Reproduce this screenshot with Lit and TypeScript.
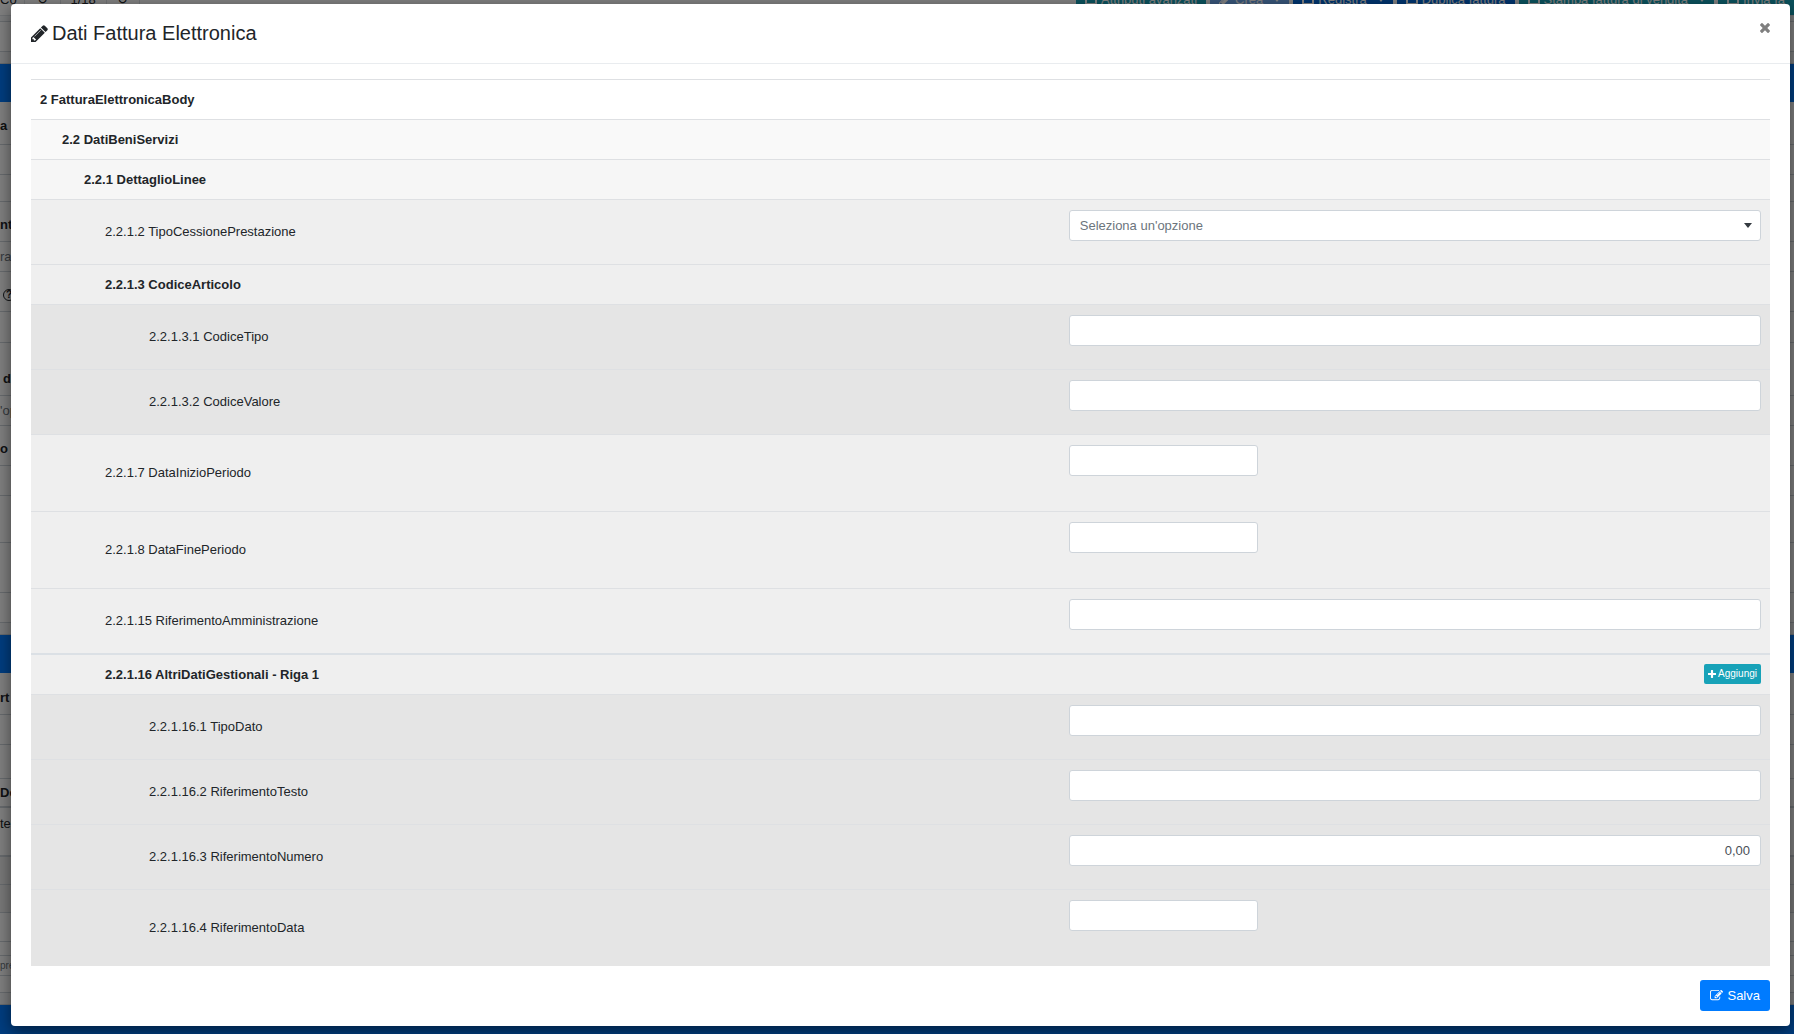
import { LitElement, html, css, svg, nothing } from "lit";
import { customElement, property } from "lit/decorators.js";

type Kind = "title" | "select" | "text" | "number" | "date";

interface Row {
  code: string;
  name: string;
  level: 1 | 2 | 3 | 4 | 5;
  kind: Kind;
  add?: boolean;
}

interface Band {
  h: number;
  cls?: string;
  text?: string;
  tcls?: string;
}

const ROWS: Row[] = [
  { code: "2", name: "FatturaElettronicaBody", level: 1, kind: "title" },
  { code: "2.2", name: "DatiBeniServizi", level: 2, kind: "title" },
  { code: "2.2.1", name: "DettaglioLinee", level: 3, kind: "title" },
  { code: "2.2.1.2", name: "TipoCessionePrestazione", level: 4, kind: "select" },
  { code: "2.2.1.3", name: "CodiceArticolo", level: 4, kind: "title" },
  { code: "2.2.1.3.1", name: "CodiceTipo", level: 5, kind: "text" },
  { code: "2.2.1.3.2", name: "CodiceValore", level: 5, kind: "text" },
  { code: "2.2.1.7", name: "DataInizioPeriodo", level: 4, kind: "date" },
  { code: "2.2.1.8", name: "DataFinePeriodo", level: 4, kind: "date" },
  { code: "2.2.1.15", name: "RiferimentoAmministrazione", level: 4, kind: "text" },
  { code: "2.2.1.16", name: "AltriDatiGestionali - Riga 1", level: 4, kind: "title", add: true },
  { code: "2.2.1.16.1", name: "TipoDato", level: 5, kind: "text" },
  { code: "2.2.1.16.2", name: "RiferimentoTesto", level: 5, kind: "text" },
  { code: "2.2.1.16.3", name: "RiferimentoNumero", level: 5, kind: "number" },
  { code: "2.2.1.16.4", name: "RiferimentoData", level: 5, kind: "date" },
];

const BANDS: Band[] = [
  { h: 6, cls: "gap" },
  { h: 30 },
  { h: 12, cls: "gap" },
  { h: 38, cls: "bar" },
  { h: 43, text: "a", tcls: "strong label" },
  { h: 30 },
  { h: 27 },
  { h: 40, text: "nto", tcls: "strong label" },
  { h: 30, text: "ra", tcls: "soft" },
  { h: 40, text: "?", tcls: "help" },
  { h: 31 },
  { h: 53, text: "d", tcls: "strong low inset" },
  { h: 30, text: "'op", tcls: "soft" },
  { h: 40, text: "o a", tcls: "strong label" },
  { h: 30 },
  { h: 47 },
  { h: 50 },
  { h: 30 },
  { h: 12, cls: "gap" },
  { h: 38, cls: "bar" },
  { h: 42, text: "rt", tcls: "strong low" },
  { h: 30 },
  { h: 34 },
  { h: 29, cls: "thick", text: "De", tcls: "strong" },
  { h: 49, cls: "thick", text: "tes", tcls: "high" },
  { h: 28, cls: "shade" },
  { h: 28, cls: "shade" },
  { h: 29 },
  { h: 14 },
  { h: 20, text: "pre", tcls: "tiny" },
  { h: 17 },
  { h: 12, cls: "gap" },
  { h: 38, cls: "bar" },
];

const PATHS = {
  pencil: {
    box: "128 128 1536 1536",
    d: "M491 1536l91-91-235-235-91 91v107h128v128h107zm523-928q0-22-22-22-10 0-17 7l-542 542q-7 7-7 17 0 22 22 22 10 0 17-7l542-542q7-7 7-17zm-54-192l416 416-832 832h-416v-416zm683 96q0 53-37 90l-166 166-416-416 166-165q36-38 90-38 53 0 91 38l235 234q37 39 37 91z",
  },
  plus: {
    box: "192 128 1408 1408",
    d: "M1600 736v192q0 40-28 68t-68 28h-416v416q0 40-28 68t-68 28h-192q-40 0-68-28t-28-68v-416h-416q-40 0-68-28t-28-68v-192q0-40 28-68t68-28h416v-416q0-40 28-68t68-28h192q40 0 68 28t28 68v416h416q40 0 68 28t28 68z",
  },
  times: {
    box: "302 366 1188 1188",
    d: "M1490 1322q0 40-28 68l-136 136q-28 28-68 28t-68-28l-294-294-294 294q-28 28-68 28t-68-28l-136-136q-28-28-28-68t28-68l294-294-294-294q-28-28-28-68t28-68l136-136q28-28 68-28t68 28l294 294 294-294q28-28 68-28t68 28l136 136q28 28 28 68t-28 68l-294 294 294 294q28 28 28 68z",
  },
  edit: {
    box: "0 0 1792 1792",
    d: "M888 1184l116-116-152-152-116 116v56h96v96h56zm440-720q-16-16-33 1l-350 350q-17 17-1 33t33-1l350-350q17-17 1-33zm80 594v190q0 119-84.5 203.5t-203.5 84.5h-832q-119 0-203.5-84.5t-84.5-203.5v-832q0-119 84.5-203.5t203.5-84.5h832q63 0 117 25 15 7 18 23 3 17-9 29l-49 49q-14 14-32 8-23-6-45-6h-832q-66 0-113 47t-47 113v832q0 66 47 113t113 47h832q66 0 113-47t47-113v-126q0-13 9-22l64-64q15-15 35-7t20 29zm-96-738l288 288-672 672h-288v-288zm444 132l-92 92-288-288 92-92q28-28 68-28t68 28l152 152q28 28 28 68t-28 68z",
  },
  caret: { box: "0 0 8 5", d: "M0 0h8L4 5z" },
  card: { box: "0 0 12 12", d: "M0 1h12v10H0zM2 3v6h8V3z" },
};

const icon = (name: keyof typeof PATHS, cls: string) => html`
  <svg class=${cls} viewBox=${PATHS[name].box} aria-hidden="true">
    ${svg`<path fill="currentColor" fill-rule="evenodd" d=${PATHS[name].d}></path>`}
  </svg>`;

/** The document page that stays visible around the dialog. */
@customElement("page-behind")
export class PageBehind extends LitElement {
  static styles = css`
    :host {
      display: block;
      background: #f4f6f9;
      color: #212529;
      font: 13px/20px "Liberation Sans", Arial, sans-serif;
    }
    .toolbar {
      display: flex;
      align-items: flex-end;
      height: 16px;
      overflow: hidden;
      gap: 4px;
      background: #fff;
      border-bottom: 1px solid #dee2e6;
      box-sizing: border-box;
    }
    .tab {
      flex: none;
      height: 31px;
      line-height: 31px;
    }
    .pager {
      flex: none;
      display: flex;
      margin: 0 auto 0 3px;
      height: 31px;
    }
    .pager span {
      box-sizing: border-box;
      width: 36px;
      border-left: 1px solid #dee2e6;
      text-align: center;
      line-height: 31px;
    }
    .pager .mid {
      width: 46px;
    }
    .pager .last {
      border-right: 1px solid #dee2e6;
      width: 34px;
    }
    .btn {
      flex: none;
      display: flex;
      align-items: center;
      gap: 4px;
      box-sizing: border-box;
      height: 31px;
      padding: 0 9px;
      border: 0;
      color: #fff;
      font: inherit;
      white-space: nowrap;
    }
    .info { background: #17a2b8; }
    .muted { background: #6ea8ee; }
    .primary { background: #0069d9; }
    .ico { width: 12px; height: 12px; }
    .caret { width: 6px; height: 4px; margin-left: 7px; }
    .band {
      box-sizing: border-box;
      display: flex;
      align-items: center;
      overflow: hidden;
      background: #fff;
      border-bottom: 1px solid #ced4da;
    }
    .gap { background: #f4f6f9; }
    .bar { background: #007bff; border: 0; }
    .shade { background: #f0f0f0; }
    .thick { border-bottom-width: 2px; }
    .strong { font-weight: 700; }
    .soft { color: #6c757d; }
    .label { padding-top: 6px; }
    .low { align-self: flex-end; padding-bottom: 6px; }
    .inset { padding-left: 3px; }
    .high { align-self: flex-start; padding-top: 6px; }
    .tiny { font-size: 10px; color: #6c757d; }
    .help {
      margin: 6px 0 0 3px;
      width: 10px;
      height: 10px;
      border: 1px solid #212529;
      border-radius: 50%;
      font-size: 10px;
      font-weight: 700;
      line-height: 10px;
      text-align: center;
    }
  `;

  private btn(cls: string, ic: keyof typeof PATHS, label: string, caret = false) {
    return html`<button class="btn ${cls}" type="button" tabindex="-1">
      ${icon(ic, "ico")}<span>${label}</span>${caret ? icon("caret", "caret") : nothing}
    </button>`;
  }

  render() {
    return html`
      <div class="toolbar">
        <span class="tab">Co</span>
        <div class="pager"><span>&#8635;</span><span class="mid">1/18</span><span class="last">&#8635;</span></div>
        ${this.btn("info", "card", "Attributi avanzati")}
        ${this.btn("muted", "pencil", "Crea", true)}
        ${this.btn("primary", "card", "Registra", true)}
        ${this.btn("primary", "card", "Duplica fattura")}
        ${this.btn("info", "card", "Stampa fattura di vendita", true)}
        ${this.btn("info", "card", "Invia fa")}
      </div>
      ${BANDS.map(
        (b) => html`<div class="band ${b.cls ?? ""}" style="height:${b.h}px">
          ${b.text ? html`<span class=${b.tcls ?? ""}>${b.text}</span>` : nothing}
        </div>`
      )}
    `;
  }
}

/** The dialog that edits the electronic invoice tree. */
@customElement("invoice-dialog")
export class InvoiceDialog extends LitElement {
  @property({ attribute: false }) rows: Row[] = ROWS;

  static styles = css`
    :host {
      display: block;
      box-sizing: border-box;
      background: #fff;
      border-radius: 4px;
      box-shadow: 0 5px 15px rgba(0, 0, 0, 0.5);
      color: #212529;
      font: 13px/19px "Liberation Sans", Arial, sans-serif;
    }
    .head {
      display: flex;
      align-items: flex-start;
      justify-content: space-between;
      box-sizing: border-box;
      height: 60px;
      padding: 14px 20px;
      border-bottom: 1px solid #e9ecef;
    }
    .title {
      display: flex;
      align-items: center;
      gap: 4px;
      margin: 0;
      font-size: 20px;
      font-weight: 400;
      line-height: 30px;
    }
    .pencil { width: 17px; height: 17px; }
    .close {
      display: flex;
      padding: 5px 0;
      border: 0;
      background: none;
      color: #7f7f7f;
    }
    .times { width: 10px; height: 10px; }
    .body { padding: 15px 20px; }
    .tree {
      width: 100%;
      border-collapse: separate;
      border-spacing: 0;
      table-layout: fixed;
    }
    .c1 { width: 59.1%; }
    th, td {
      box-sizing: border-box;
      padding: 10px 9px;
      border-top: 1px solid #dee0e3;
      text-align: left;
      font-weight: 400;
      vertical-align: middle;
    }
    td { vertical-align: top; padding-left: 10px; }
    .heading th { font-weight: 700; height: 40px; }
    .heading td { padding-top: 9px; padding-bottom: 9px; text-align: right; }
    .field th { height: 65px; padding-bottom: 11px; }
    .tall th { height: 77px; }
    .repeat th, .repeat td { height: 41px; border-top-width: 2px; border-top-color: #dbe0e5; }
    .l2 { background: #f9f9f9; }
    .l3 { background: #f6f6f6; }
    .l4 { background: #efefef; }
    .l5 { background: #e5e5e5; }
    .l2 th { padding-left: 31px; }
    .l3 th { padding-left: 53px; }
    .l4 th { padding-left: 74px; }
    .l5 th { padding-left: 118px; }
    .control {
      display: block;
      box-sizing: border-box;
      width: 100%;
      height: 31px;
      margin: 0;
      padding: 0 10px;
      border: 1px solid #ced4da;
      border-radius: 3px;
      background: #fff;
      color: #495057;
      font: inherit;
      appearance: none;
    }
    .number { text-align: right; }
    .date { width: 189px; }
    .pick { display: grid; align-items: center; }
    .pick > * { grid-area: 1 / 1; }
    .pick .control { color: #6c757d; }
    .caret {
      justify-self: end;
      width: 8px;
      height: 5px;
      margin-right: 9px;
      color: #343a40;
      pointer-events: none;
    }
    .add {
      display: inline-flex;
      align-items: center;
      gap: 2px;
      height: 20px;
      padding: 0 4px;
      border: 0;
      border-radius: 2px;
      background: #17a2b8;
      color: #fff;
      font: 10px/20px "Liberation Sans", Arial, sans-serif;
      vertical-align: top;
    }
    .plus { width: 8px; height: 8px; }
    .actions {
      display: flex;
      justify-content: flex-end;
      margin-top: 14px;
    }
    .save {
      display: flex;
      align-items: center;
      gap: 4px;
      height: 31px;
      padding: 0 10px;
      border: 0;
      border-radius: 3px;
      background: #007bff;
      color: #fff;
      font: inherit;
    }
    .edit { width: 13px; height: 13px; }
  `;

  private control(r: Row) {
    const id = `f-${r.code}`;
    if (r.kind === "select") {
      return html`<div class="pick">
        <select class="control" id=${id}><option>Seleziona un'opzione</option></select>
        ${icon("caret", "caret")}
      </div>`;
    }
    return html`<input class="control ${r.kind}" id=${id} type="text" .value=${r.kind === "number" ? "0,00" : ""} />`;
  }

  private row(r: Row) {
    const text = `${r.code} ${r.name}`;
    if (r.kind === "title") {
      return html`<tr class="heading l${r.level} ${r.add ? "repeat" : ""}">
        <th scope="row" colspan=${r.add ? 1 : 2}>${text}</th>
        ${r.add
          ? html`<td><button class="add" type="button">${icon("plus", "plus")}Aggiungi</button></td>`
          : nothing}
      </tr>`;
    }
    return html`<tr class="field l${r.level} ${r.kind === "date" ? "tall" : ""}">
      <th scope="row"><label for="f-${r.code}">${text}</label></th>
      <td>${this.control(r)}</td>
    </tr>`;
  }

  render() {
    return html`
      <header class="head">
        <h4 class="title">${icon("pencil", "pencil")}Dati Fattura Elettronica</h4>
        <button class="close" type="button" aria-label="Chiudi">${icon("times", "times")}</button>
      </header>
      <div class="body">
        <table class="tree">
          <colgroup><col class="c1" /><col /></colgroup>
          <tbody>${this.rows.map((r) => this.row(r))}</tbody>
        </table>
        <div class="actions">
          <button class="save" type="button">${icon("edit", "edit")}Salva</button>
        </div>
      </div>
    `;
  }
}

@customElement("app-root")
export class AppRoot extends LitElement {
  static styles = css`
    :host {
      display: grid;
      grid-template-columns: minmax(0, 1fr);
      min-height: 100vh;
      overflow: hidden;
    }
    .layer {
      grid-area: 1 / 1;
      min-width: 0;
    }
    .page {
      height: 0;
      min-height: 100%;
      overflow: hidden;
    }
    .shade { background: rgba(0, 0, 0, 0.5); }
    .dialog {
      align-self: start;
      margin: 4px 4px 8px 11px;
    }
  `;

  render() {
    return html`
      <page-behind class="layer page"></page-behind>
      <div class="layer shade"></div>
      <invoice-dialog class="layer dialog" role="dialog" aria-label="Dati Fattura Elettronica"></invoice-dialog>
    `;
  }
}
